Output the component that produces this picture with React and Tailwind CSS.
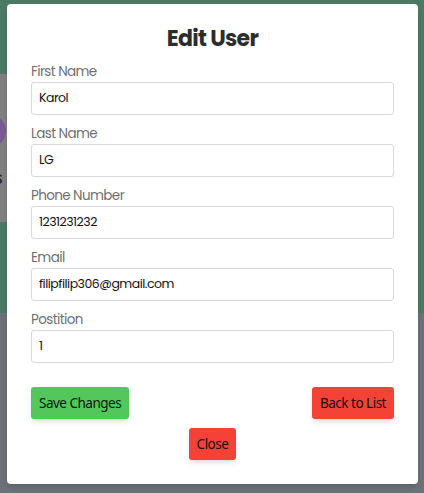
import React from "react";

const fields = [
  { label: "First Name", value: "Karol" },
  { label: "Last Name", value: "LG" },
  { label: "Phone Number", value: "1231231232" },
  { label: "Email", value: "filipfilip306@gmail.com" },
  { label: "Postition", value: "1" },
];

function Field({ label, value }) {
  return (
    <div className="mb-2 flex flex-col">
      <label className="text-[13.5px] leading-[21px] tracking-[-0.6px] text-[#707070]">
        {label}
      </label>
      <div className="flex h-[33px] items-center rounded-[3px] border border-[#d9d9d9] px-[7px] text-[12.5px] tracking-[-0.5px] text-[#111]">
        {value}
      </div>
    </div>
  );
}

export default function App() {
  return (
    <div className="relative h-[493px] w-[424px] overflow-hidden bg-[#6c7179]">
      {/* page behind the overlay */}
      <div className="h-[74px] bg-[#4a7a64]" />
      <div className="h-[239px] bg-[#4a7a64]">
        <div className="relative h-[148px] w-[200px] bg-[#808080]">
          <div className="absolute left-[-26px] top-[41px] h-[32px] w-[32px] rounded-full bg-[#765a93]" />
          <div className="absolute left-[-7px] top-[93px] text-[19px] leading-[22px] text-[#1e1e1e] [font-family:'Liberation_Sans',sans-serif]">
            s
          </div>
        </div>
      </div>

      {/* modal */}
      <div
        className="absolute left-[7px] top-[4px] w-[411px] rounded-[4px] bg-white p-6 shadow-md"
        style={{ fontFamily: "'Poppins', 'Open Sans', sans-serif" }}
      >
        <h2 className="mb-[11px] text-center text-[22px] font-bold leading-[22px] tracking-[-0.7px] text-[#2d2d2d]">
          Edit User
        </h2>
        {fields.map((f, i) => (
          <Field key={i} label={f.label} value={f.value} />
        ))}
        <div
          className="mt-[24px] flex flex-col text-[13.5px] tracking-[-0.5px] text-[#111]"
          style={{ fontFamily: "'Noto Sans', sans-serif" }}
        >
          <div className="flex justify-between">
            <button className="h-[32px] rounded-[3px] bg-[#52c85a] px-2 shadow-md">
              Save Changes
            </button>
            <button className="h-[32px] rounded-[3px] bg-[#f44336] px-2 shadow-md">
              Back to List
            </button>
          </div>
          <div className="mt-[9px] flex justify-center">
            <button className="h-[32px] rounded-[3px] bg-[#f44336] px-2 shadow-md">
              Close
            </button>
          </div>
        </div>
      </div>
    </div>
  );
}
